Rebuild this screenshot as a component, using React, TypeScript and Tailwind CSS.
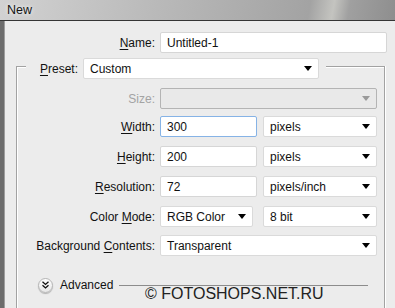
import React from 'react';

type LabelProps = { text: string; u?: number; disabled?: boolean; className?: string };

// label with the mnemonic letter underlined
function Label({ text, u = -1, disabled, className = '' }: LabelProps) {
  return (
    <div className={`text-right text-[12px] leading-none ${disabled ? 'text-[#a3a3a3]' : 'text-[#111]'} ${className}`}>
      {u >= 0 ? (
        <>
          {text.slice(0, u)}
          <span className="underline underline-offset-2">{text[u]}</span>
          {text.slice(u + 1)}
        </>
      ) : (
        text
      )}
    </div>
  );
}

function Arrow({ disabled }: { disabled?: boolean }) {
  return (
    <svg width="8" height="5" viewBox="0 0 8 5" className="shrink-0">
      <polygon points="0,0 8,0 4,5" fill={disabled ? '#9a9a9a' : '#000'} />
    </svg>
  );
}

function Select({ value, className = '', disabled }: { value?: string; className?: string; disabled?: boolean }) {
  return (
    <div
      className={`h-[21px] flex items-center justify-between pl-[6px] pr-[6px] border rounded-[2px] text-[12px] text-[#111] ${
        disabled ? 'bg-[#e9e9e9] border-[#b4b4b4]' : 'bg-white border-[#dadada]'
      } ${className}`}
    >
      <span>{value}</span>
      <Arrow disabled={disabled} />
    </div>
  );
}

function Field({ value, className = '', focused }: { value: string; className?: string; focused?: boolean }) {
  return (
    <div
      className={`h-[21px] flex items-center pl-[6px] bg-white border rounded-[2px] text-[12px] text-[#111] ${
        focused ? 'border-[#86b3e6]' : 'border-[#d6d6d6]'
      } ${className}`}
    >
      {value}
    </div>
  );
}

export default function App() {
  return (
    <div className="w-[395px] h-[308px] overflow-hidden relative bg-[#6c6c6c] flex flex-col font-['Liberation_Sans',Arial,sans-serif]">
      {/* Title bar */}
      <div className="h-[20px] shrink-0 flex items-center pl-[7px] bg-[linear-gradient(100deg,#d2d2d2_0%,#b9b9b9_40%,#a3a3a3_78%,#c4c4c0_84%,#a0a0a0_88%,#8e8e8e_100%)]">
        <span className="text-[12.5px] text-[#151515] [text-shadow:0_0_4px_#fff]">New</span>
      </div>
      <div className="h-px shrink-0 bg-[#353535]" />

      <div className="flex flex-1">
        <div className="w-[4px] bg-[#6c6c6c]" />
        <div className="w-px bg-[#9d9d9d]" />
        {/* Dialog panel */}
        <div className="flex-1 bg-[#ececec] flex flex-col">
          {/* Name */}
          <div className="flex items-center mt-[11px]">
            <Label text="Name:" u={0} className="w-[150px]" />
            <Field value="Untitled-1" className="ml-[5px] w-[227px]" />
          </div>

          {/* Preset group */}
          <div className="ml-[11px] mt-[13px] w-[369px] h-[260px] border-l border-r border-[#a2a2a2] shadow-[inset_1px_0_0_#fff,1px_0_0_#fff]">
            <div className="flex items-start -mt-[8px] h-[21px]">
              <div className="w-[9px] mt-[8px] border-t border-[#a2a2a2] shadow-[0_1px_0_#fff]" />
              <div className="w-[52px] h-[21px] flex items-center justify-end">
                <Label text="Preset:" u={0} />
              </div>
              <Select value="Custom" className="ml-[5px] w-[236px]" />
              <div className="flex-1 ml-[7px] mt-[8px] border-t border-[#a2a2a2] shadow-[0_1px_0_#fff]" />
            </div>

            <div className="flex items-center mt-[9px]">
              <Label text="Size:" disabled className="w-[138px]" />
              <Select disabled className="ml-[5px] w-[217px]" />
            </div>

            <div className="flex items-center mt-[7px]">
              <Label text="Width:" u={0} className="w-[138px]" />
              <Field value="300" focused className="ml-[5px] w-[97px]" />
              <Select value="pixels" className="ml-[6px] w-[114px]" />
            </div>

            <div className="flex items-center mt-[9px]">
              <Label text="Height:" u={0} className="w-[138px]" />
              <Field value="200" className="ml-[5px] w-[97px]" />
              <Select value="pixels" className="ml-[6px] w-[114px]" />
            </div>

            <div className="flex items-center mt-[9px]">
              <Label text="Resolution:" u={0} className="w-[138px]" />
              <Field value="72" className="ml-[5px] w-[97px]" />
              <Select value="pixels/inch" className="ml-[6px] w-[114px]" />
            </div>

            <div className="flex items-center mt-[9px]">
              <Label text="Color Mode:" u={6} className="w-[138px]" />
              <Select value="RGB Color" className="ml-[5px] w-[93px]" />
              <Select value="8 bit" className="ml-[10px] w-[114px]" />
            </div>

            <div className="flex items-center mt-[8px]">
              <Label text="Background Contents:" u={11} className="w-[138px]" />
              <Select value="Transparent" className="ml-[5px] w-[217px]" />
            </div>

            {/* Advanced */}
            <div className="flex items-center mt-[20px]">
              <div className="ml-[21px] w-[15px] h-[15px] rounded-full bg-[linear-gradient(#ffffff,#e6e6e6)] border border-[#b5b5b5] shadow-[0_1px_1px_rgba(0,0,0,0.25)] flex items-center justify-center">
                <svg width="7" height="8" viewBox="0 0 7 8">
                  <polyline points="0.5,0.8 3.5,3.5 6.5,0.8" fill="none" stroke="#111" strokeWidth="1.3" />
                  <polyline points="0.5,4.3 3.5,7 6.5,4.3" fill="none" stroke="#111" strokeWidth="1.3" />
                </svg>
              </div>
              <span className="ml-[7px] text-[12px] text-[#111]">Advanced</span>
              <div className="ml-[6px] w-[249px] h-px bg-[#8c8c8c]" />
            </div>
          </div>
        </div>
      </div>

      {/* Watermark */}
      <div className="absolute left-[145px] top-[286px] text-[16px] leading-none text-[#222] whitespace-nowrap">
        © FOTOSHOPS.NET.RU
      </div>
    </div>
  );
}
